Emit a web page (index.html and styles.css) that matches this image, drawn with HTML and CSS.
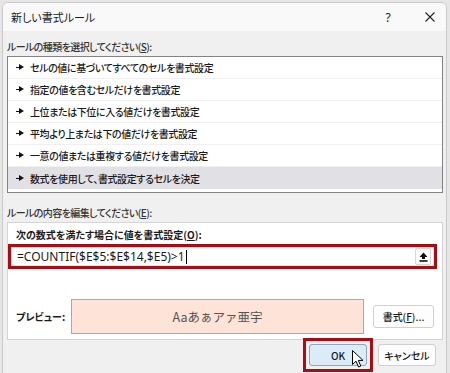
FILE: index.html
```html
<!DOCTYPE html>
<html lang="ja">
<head>
    <meta charset="UTF-8">
    <title>新しい書式ルール</title>
    <link rel="stylesheet" href="styles.css">
</head>
<body>
    <div class="window">
        <div class="titlebar">
            <span class="title">新しい書式ルール</span>
            <span class="help">?</span>
            <span class="close">
                <svg width="10" height="10" viewBox="0 0 10 10"><path d="M0.5 0.5L9.5 9.5M9.5 0.5L0.5 9.5" stroke="#222" stroke-width="1.1"/></svg>
            </span>
        </div>
        <div class="content">
            <div class="label">ルールの種類を選択してください(<u>S</u>):</div>
            <ul class="rule-list">
                <li><span class="arrow"></span>セルの値に基づいてすべてのセルを書式設定</li>
                <li><span class="arrow"></span>指定の値を含むセルだけを書式設定</li>
                <li><span class="arrow"></span>上位または下位に入る値だけを書式設定</li>
                <li><span class="arrow"></span>平均より上または下の値だけを書式設定</li>
                <li><span class="arrow"></span>一意の値または重複する値だけを書式設定</li>
                <li class="selected"><span class="arrow"></span>数式を使用して、書式設定するセルを決定</li>
            </ul>

            <div class="label second">ルールの内容を編集してください(<u>E</u>):</div>
            <div class="panel">
                <div class="panel-label">次の数式を満たす場合に値を書式設定(<u>O</u>):</div>
                <div class="highlight">
                    <div class="formula">
                        <span class="formula-text">=COUNTIF($E$5:$E$14,$E5)&gt;1</span><span class="caret"></span>
                        <span class="ref-btn">
                            <svg width="9" height="10" viewBox="0 0 9 10"><path d="M4.5 0.5L8.5 5H6V7H3V5H0.5Z" fill="#111"/><rect x="0.5" y="8.2" width="8" height="1.6" fill="#111"/></svg>
                        </span>
                    </div>
                </div>
                <div class="preview-row">
                    <span class="preview-label">プレビュー:</span>
                    <div class="preview-box">Aaあぁアァ亜宇</div>
                    <button class="btn format-btn">書式(<u>F</u>)...</button>
                </div>
            </div>

            <div class="footer">
                <span class="ok-mark">
                    <button class="btn ok-btn">OK
                        <svg class="cursor" width="12" height="18" viewBox="0 0 12 18"><path d="M0.5 0.5V14.5L4 11.2L6.6 17L8.8 16L6.3 10.4H11Z" fill="#fff" stroke="#000" stroke-width="1"/></svg>
                    </button>
                </span>
                <button class="btn cancel-btn">キャンセル</button>
            </div>
        </div>
    </div>
</body>
</html>
```

FILE: styles.css
```css
body {
    margin: 0;
    background-color: #e6e6e6;
    font-family: "Noto Sans CJK JP", "Noto Sans", sans-serif;
    font-size: 10px;
    font-weight: 500;
    font-feature-settings: "palt";
    color: #1a1a1a;
    overflow: hidden;
}
.window {
    margin: 2px 3px 0 2px;
    height: 380px;
    background-color: #f0f0f0;
    border: 1px solid #c9c9c9;
    border-radius: 6px 6px 0 0;
    overflow: hidden;
}
.titlebar {
    display: flex;
    align-items: center;
    height: 28px;
    padding-left: 8px;
    background-color: #f9f9f9;
    font-size: 11px;
    font-weight: 400;
}
.title {
    flex: 1;
}
.help {
    width: 20px;
    text-align: center;
    font-family: "Noto Sans", sans-serif;
    font-size: 12px;
    margin-right: 22px;
}
.close {
    width: 20px;
    margin-right: 6px;
    display: flex;
    justify-content: center;
}
.content {
    padding: 0 3px 0 4px;
}
.label {
    height: 16px;
    line-height: 16px;
    margin-top: 8px;
    letter-spacing: -0.6px;
    color: #333;
}
.label.second {
    margin-top: 12px;
    margin-bottom: 1px;
}
.rule-list {
    list-style: none;
    margin: 1px 0 0;
    padding: 0 0 3px;
    background: #fff;
    border: 1px solid #838383;
}
.rule-list li {
    display: flex;
    align-items: center;
    height: 22px;
    box-sizing: border-box;
    border-bottom: 1px solid #f0f0f0;
    padding-left: 8px;
    letter-spacing: -0.4px;
}
.rule-list li.selected {
    background-color: #e1e0e5;
    border-bottom: none;
}
.arrow {
    display: inline-block;
    width: 4px;
    height: 1px;
    background: #111;
    position: relative;
    margin-right: 10px;
}
.arrow::after {
    content: "";
    position: absolute;
    left: 3px;
    top: -3px;
    border-left: 5px solid #111;
    border-top: 3.5px solid transparent;
    border-bottom: 3.5px solid transparent;
}
.panel {
    background: #fff;
    border: 1px solid #d4d4d4;
    padding: 4px 0 5px 0;
}
.panel-label {
    font-weight: bold;
    height: 16px;
    line-height: 16px;
    padding-left: 8px;
}
.highlight {
    margin: 1px 5px 0 0;
    border: 3px solid #a70d12;
}
.formula {
    display: flex;
    align-items: center;
    height: 19px;
    padding: 0 3px 0 6px;
    background: #fff;
    box-shadow: inset 0 0 0 1px #e4e4e4;
}
.formula-text {
    font-family: "Noto Sans", sans-serif;
    font-size: 12px;
    font-weight: 400;
    font-feature-settings: normal;
}
.caret {
    width: 1px;
    height: 14px;
    background: #000;
    margin-left: 1px;
}
.ref-btn {
    margin-left: auto;
    width: 14px;
    height: 15px;
    display: flex;
    align-items: center;
    justify-content: center;
    border: 1px solid #d8d8d8;
    border-radius: 2px;
    background: #fdfdfd;
}
.preview-row {
    display: flex;
    align-items: center;
    margin-top: 30px;
    padding-left: 8px;
}
.preview-label {
    font-weight: bold;
    width: 55px;
}
.preview-box {
    width: 291px;
    height: 33px;
    line-height: 33px;
    background-color: #fde3d8;
    border: 1px solid #a9a9a9;
    text-align: center;
    color: #555;
    font-size: 12.5px;
    font-weight: 400;
    font-feature-settings: normal;
}
.btn {
    font-family: "Noto Sans CJK JP", "Noto Sans", sans-serif;
    font-size: 10px;
    font-weight: 500;
    font-feature-settings: "palt";
    color: #1a1a1a;
    background: #fdfdfd;
    border: 1px solid #d0d0d0;
    border-radius: 3px;
    height: 23px;
    padding: 0;
}
.format-btn {
    width: 61px;
    margin-left: 9px;
}
.footer {
    display: flex;
    justify-content: flex-end;
    align-items: flex-start;
    gap: 5px;
    padding: 0 7px 0 0;
}
.ok-mark {
    display: flex;
    border: 3px solid #a70d12;
    padding: 3px;
    margin-top: -2px;
}
.ok-btn {
    position: relative;
    width: 58px;
    height: 22px;
    background-color: #dcebf8;
    border-color: #8fa6bd;
}
.cancel-btn {
    width: 58px;
    height: 22px;
    margin-top: 4px;
}
.cursor {
    position: absolute;
    left: 42px;
    top: 5px;
}
```
